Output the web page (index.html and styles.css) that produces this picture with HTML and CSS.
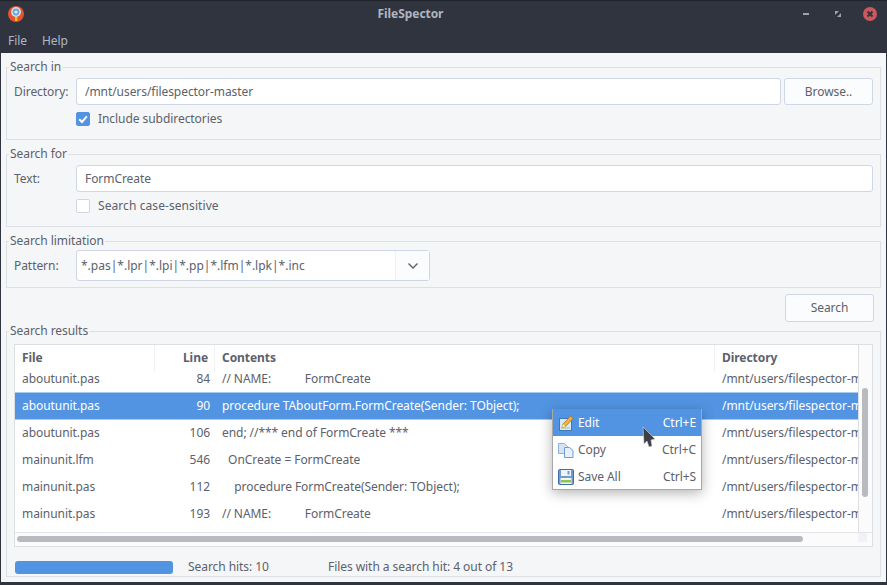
FILE: index.html
```html
<!DOCTYPE html>
<html lang="en">
<head>
<meta charset="utf-8">
<title>FileSpector</title>
<link rel="stylesheet" href="styles.css">
</head>
<body>
<div class="window">
  <header class="titlebar">
    <svg class="app-icon" width="16" height="16" viewBox="0 0 16 16"><circle cx="8" cy="8" r="8" fill="#e5532d"/><circle cx="8" cy="6" r="5" fill="#d8dfe6"/><circle cx="8" cy="6" r="3.4" fill="#6aa5dc"/><circle cx="8" cy="6" r="1.6" fill="#dbe9f5"/><rect x="7" y="11" width="2.4" height="4" fill="#f6c120"/></svg>
    <div class="title">FileSpector</div>
    <div class="win-controls">
      <svg width="16" height="16" viewBox="0 0 16 16"><rect x="4" y="7" width="6" height="2" fill="#9ea3ad"/></svg>
      <svg width="16" height="16" viewBox="0 0 16 16"><path d="M4 5h4L4 9z M10 11H6l4-4z" fill="#9ea3ad"/></svg>
      <svg width="14" height="14" viewBox="0 0 14 14"><circle cx="7" cy="7" r="7" fill="#cc575d"/><path d="M4.500 4.500l5 5m0-5l-5 5" stroke="#2f343f" stroke-width="2"/></svg>
    </div>
  </header>
  <nav class="menubar"><span>File</span><span>Help</span></nav>
  <main class="content">
    <fieldset class="group group-tall">
      <legend>Search in</legend>
      <div class="field-row">
        <label class="field-label">Directory:</label>
        <div class="input grow">/mnt/users/filespector-master</div>
        <button class="btn btn-browse">Browse..</button>
      </div>
      <div class="check-row">
        <span class="check checked"><svg width="14" height="14" viewBox="0 0 14 14"><path d="M3.200 7.200 6 10l4.800-5.600" fill="none" stroke="#fff" stroke-width="2"/></svg></span>
        <span>Include subdirectories</span>
      </div>
    </fieldset>
    <fieldset class="group group-tall">
      <legend>Search for</legend>
      <div class="field-row">
        <label class="field-label">Text:</label>
        <div class="input grow">FormCreate</div>
      </div>
      <div class="check-row">
        <span class="check"></span>
        <span class="wide-text">Search case-sensitive</span>
      </div>
    </fieldset>
    <fieldset class="group group-short">
      <legend>Search limitation</legend>
      <div class="field-row">
        <label class="field-label">Pattern:</label>
        <div class="combo">
          <div class="combo-text">*.pas|*.lpr|*.lpi|*.pp|*.lfm|*.lpk|*.inc</div>
          <div class="combo-arrow"><svg width="12" height="8" viewBox="0 0 12 8"><path d="M1.500 1.500 6 6l4.500-4.500" fill="none" stroke="#5c616c" stroke-width="1.400"/></svg></div>
        </div>
      </div>
    </fieldset>
    <div class="search-row"><button class="btn btn-search">Search</button></div>
    <fieldset class="group group-results">
      <legend>Search results</legend>
      <div class="table">
        <div class="table-main">
          <div class="table-area">
            <div class="thead">
              <div class="c c1">File</div><div class="c c2">Line</div><div class="c c3">Contents</div><div class="c c4">Directory</div>
            </div>
            <div class="tbody">
              <div class="tr first"><div class="c c1">aboutunit.pas</div><div class="c c2">84</div><div class="c c3">// NAME:           FormCreate</div><div class="c c4">/mnt/users/filespector-master</div></div>
              <div class="tr selected"><div class="c c1">aboutunit.pas</div><div class="c c2">90</div><div class="c c3">procedure TAboutForm.FormCreate(Sender: TObject);</div><div class="c c4">/mnt/users/filespector-master</div></div>
              <div class="tr"><div class="c c1">aboutunit.pas</div><div class="c c2">106</div><div class="c c3">end; //*** end of FormCreate ***</div><div class="c c4">/mnt/users/filespector-master</div></div>
              <div class="tr"><div class="c c1">mainunit.lfm</div><div class="c c2">546</div><div class="c c3">  OnCreate = FormCreate</div><div class="c c4">/mnt/users/filespector-master</div></div>
              <div class="tr"><div class="c c1">mainunit.pas</div><div class="c c2">112</div><div class="c c3">    procedure FormCreate(Sender: TObject);</div><div class="c c4">/mnt/users/filespector-master</div></div>
              <div class="tr"><div class="c c1">mainunit.pas</div><div class="c c2">193</div><div class="c c3">// NAME:           FormCreate</div><div class="c c4">/mnt/users/filespector-master</div></div>
            </div>
          </div>
          <div class="vscroll"><div class="vthumb"></div></div>
        </div>
        <div class="hscroll-row">
          <div class="hscroll"><div class="hthumb"></div></div>
          <div class="corner"></div>
        </div>
      </div>
      <div class="status">
        <div class="progress"></div>
        <span class="hits">Search hits: 10</span>
        <span>Files with a search hit: 4 out of 13</span>
      </div>
    </fieldset>
  </main>
</div>
<div class="menu">
  <div class="menu-item active">
    <svg width="16" height="16" viewBox="0 0 16 16"><rect x="1.500" y="3.500" width="12" height="12" fill="#d9e8f7" stroke="#3f78b8"/><rect x="3" y="12" width="9" height="2" fill="#c9d6b0"/><path d="M4 12.500 5 9 12.500 1 15 3.500 7.500 11.500z" fill="#f2b13c" stroke="#a86f1a" stroke-width=".7"/><path d="M4 12.500l1-3.500 2.500 2.500z" fill="#fbe7c0"/></svg>
    <span class="menu-label">Edit</span><span>Ctrl+E</span>
  </div>
  <div class="menu-item">
    <svg width="16" height="16" viewBox="0 0 16 16"><path d="M.5 1.500h6l3 3v7H.5z" fill="#d5e4f5" stroke="#8fb2dc"/><path d="M6.500 5.500h5l3.500 3v7H6.500z" fill="#e6effa" stroke="#6f9bd1"/></svg>
    <span class="menu-label">Copy</span><span>Ctrl+C</span>
  </div>
  <div class="menu-item">
    <svg width="16" height="16" viewBox="0 0 16 16"><rect x=".5" y=".5" width="15" height="15" rx="1" fill="#6f9bd1" stroke="#3d6ca8"/><rect x="3" y="1" width="10" height="6" fill="#f0f4f9"/><rect x="9.500" y="2" width="2" height="3.500" fill="#6f9bd1"/><rect x="2.500" y="9" width="11" height="6" fill="#f4f7ea"/><rect x="3" y="11" width="10" height="2.500" fill="#8fc25a"/></svg>
    <span class="menu-label">Save All</span><span>Ctrl+S</span>
  </div>
</div>
<svg class="cursor" width="14" height="22" viewBox="0 0 14 22"><path d="M1 1 13 13 9 14 10 20 7 21 5 15 2 18z" fill="#3c3f44" stroke="#d8d8d8" stroke-width=".6"/></svg>
</body>
</html>
```
FILE: styles.css
```css
* { box-sizing: border-box; }
html, body { margin: 0; height: 100%; }
body {
  width: 887px;
  height: 585px;
  overflow: hidden;
  position: relative;
  background: #2f343f;
  font: 12px/16px "Noto Sans", sans-serif;
  letter-spacing: -0.06px;
  color: #5c616c;
}
.window { display: flex; flex-direction: column; height: 582px; }
.titlebar {
  height: 26px;
  flex: none;
  display: flex;
  align-items: center;
  padding: 0 0 0 8px;
  background: #2f343f;
  border-top: 1px solid #20232b;
}
.app-icon { flex: none; }
.title {
  flex: 1;
  text-align: center;
  font-weight: 700;
  font-size: 12px;
  color: #b0b5c0;
  padding-right: 2px;
}
.win-controls { display: flex; align-items: center; gap: 16px; padding: 1px 10px 0 0; }
.menubar {
  height: 27px;
  flex: none;
  display: flex;
  gap: 15px;
  align-items: center;
  padding: 2px 0 0 8px;
  background: #2f343f;
  color: #afb8c6;
}
.content {
  flex: 1;
  margin: 0 1px;
  background: #f5f6f7;
  padding: 7px 5px 0;
  display: flex;
  flex-direction: column;
}
.group {
  margin: 0;
  padding: 0;
  border: 1px solid #dcdfe3;
  min-width: 0;
}
.group legend {
  margin-left: -5px;
  padding: 0 1px;
  font-size: 12px;
  line-height: 14px;
}
.group-tall { height: 80px; margin-bottom: 7px; padding: 4px 7px 0; }
.group-short { height: 54px; padding: 2px 7px 0; }
.group-results { height: 253px; padding: 6px 7px 0; }
.field-row { display: flex; align-items: center; height: 27px; }
.group-short .field-row { height: 31px; }
.field-label { width: 62px; }
.input {
  height: 27px;
  background: #fff;
  border: 1px solid #cfd6e6;
  border-radius: 3px;
  padding: 0 8px;
  line-height: 25px;
}
.grow { flex: 1; }
.btn {
  font: inherit;
  letter-spacing: inherit;
  color: #5c616c;
  height: 27px;
  background: #fbfcfd;
  border: 1px solid #cfd6e6;
  border-radius: 3px;
  padding: 0;
}
.btn-browse { width: 89px; margin-left: 3px; }
.check-row { display: flex; align-items: center; gap: 8px; height: 28px; padding-left: 62px; }
.wide-text { letter-spacing: .08px; }
.check {
  width: 14px;
  height: 14px;
  border: 1px solid #cfd6e6;
  border-radius: 2px;
  background: #fff;
  display: block;
}
.check svg { display: block; margin: -1px; }
.check.checked { background: #5294e2; border-color: #5294e2; }
.combo {
  width: 354px;
  height: 31px;
  display: flex;
  background: #fff;
  border: 1px solid #cfd6e6;
  border-radius: 3px;
}
.combo-text { flex: 1; padding: 0 4px; line-height: 29px; letter-spacing: 0; }
.combo-arrow {
  width: 34px;
  display: flex;
  align-items: center;
  justify-content: center;
  background: #fbfcfd;
  border-left: 1px solid #eef0f3;
}
.search-row { display: flex; justify-content: flex-end; padding: 6px 7px 0 0; height: 36px; flex: none; }
.btn-search { width: 89px; height: 28px; }
.table {
  border: 1px solid #dcdfe3;
  background: #fff;
  height: 203px;
  display: flex;
  flex-direction: column;
}
.table-main { flex: 1; display: flex; min-height: 0; }
.table-area { flex: 1; min-width: 0; display: flex; flex-direction: column; }
.thead { display: flex; height: 27px; flex: none; font-weight: 700; background: #fff; }
.thead .c { height: 27px; line-height: 25px; border-right: 1px solid #f0f1f3; }
.thead .c4 { border-right: 0; }
.tbody { flex: 1; overflow: hidden; min-height: 0; }
.tr {
  display: flex;
  height: 27px;
  line-height: 26px;
}
.tr.first { height: 21px; line-height: 14px; }
.tr.first .c { height: 16px; line-height: 14px; overflow: visible; }
.tr.first .c4 { overflow: hidden; }
.tr.selected { background: #5294e2; color: #fff; border-top: 1px solid #a9caf0; border-bottom: 1px solid #a9caf0; margin-top: -1px; height: 28px; }
.c { flex: none; padding: 0 7px; white-space: pre; overflow: hidden; }
.c1 { width: 140px; }
.c2 { width: 60px; text-align: right; padding-right: 5px; }
.thead .c2 { padding-right: 6px; }
.c3 { width: 500px; }
.c4 { width: 144px; padding-right: 0; }
.vscroll { width: 14px; flex: none; background: #fbfbfc; border-left: 1px solid #dcdfe3; padding: 43px 0 0 3px; }
.vthumb { width: 6px; height: 109px; border-radius: 3px; background: #b8babf; }
.hscroll-row { height: 14px; flex: none; display: flex; border-top: 1px solid #e2e4e7; background: #fbfbfc; }
.hscroll { flex: 1; padding: 3px 0 0 2px; }
.hthumb { width: 786px; height: 6px; border-radius: 3px; background: #b8babf; }
.corner { width: 9px; height: 9px; margin-right: 5px; background: #f1f2f5; }
.status { display: flex; align-items: center; height: 30px; padding: 10px 0 0 1px; }
.progress { width: 158px; height: 13px; background: #5294e2; border-radius: 3px; }
.hits { margin: 0 45px 0 15px; width: 95px; }
.menu {
  position: absolute;
  left: 552px;
  top: 409px;
  width: 150px;
  height: 81px;
  background: #fff;
  border: 1px solid #a8a8a8;
  border-top: 0;
  box-shadow: 0 3px 12px rgba(0, 0, 0, .3);
}
.menu-item { display: flex; align-items: center; height: 27px; padding: 0 5px; }
.menu-item svg { flex: none; margin-right: 4px; }
.menu-item.active { background: #5294e2; color: #fff; }
.menu-label { flex: 1; }
.cursor { position: absolute; left: 642px; top: 426px; }
```
